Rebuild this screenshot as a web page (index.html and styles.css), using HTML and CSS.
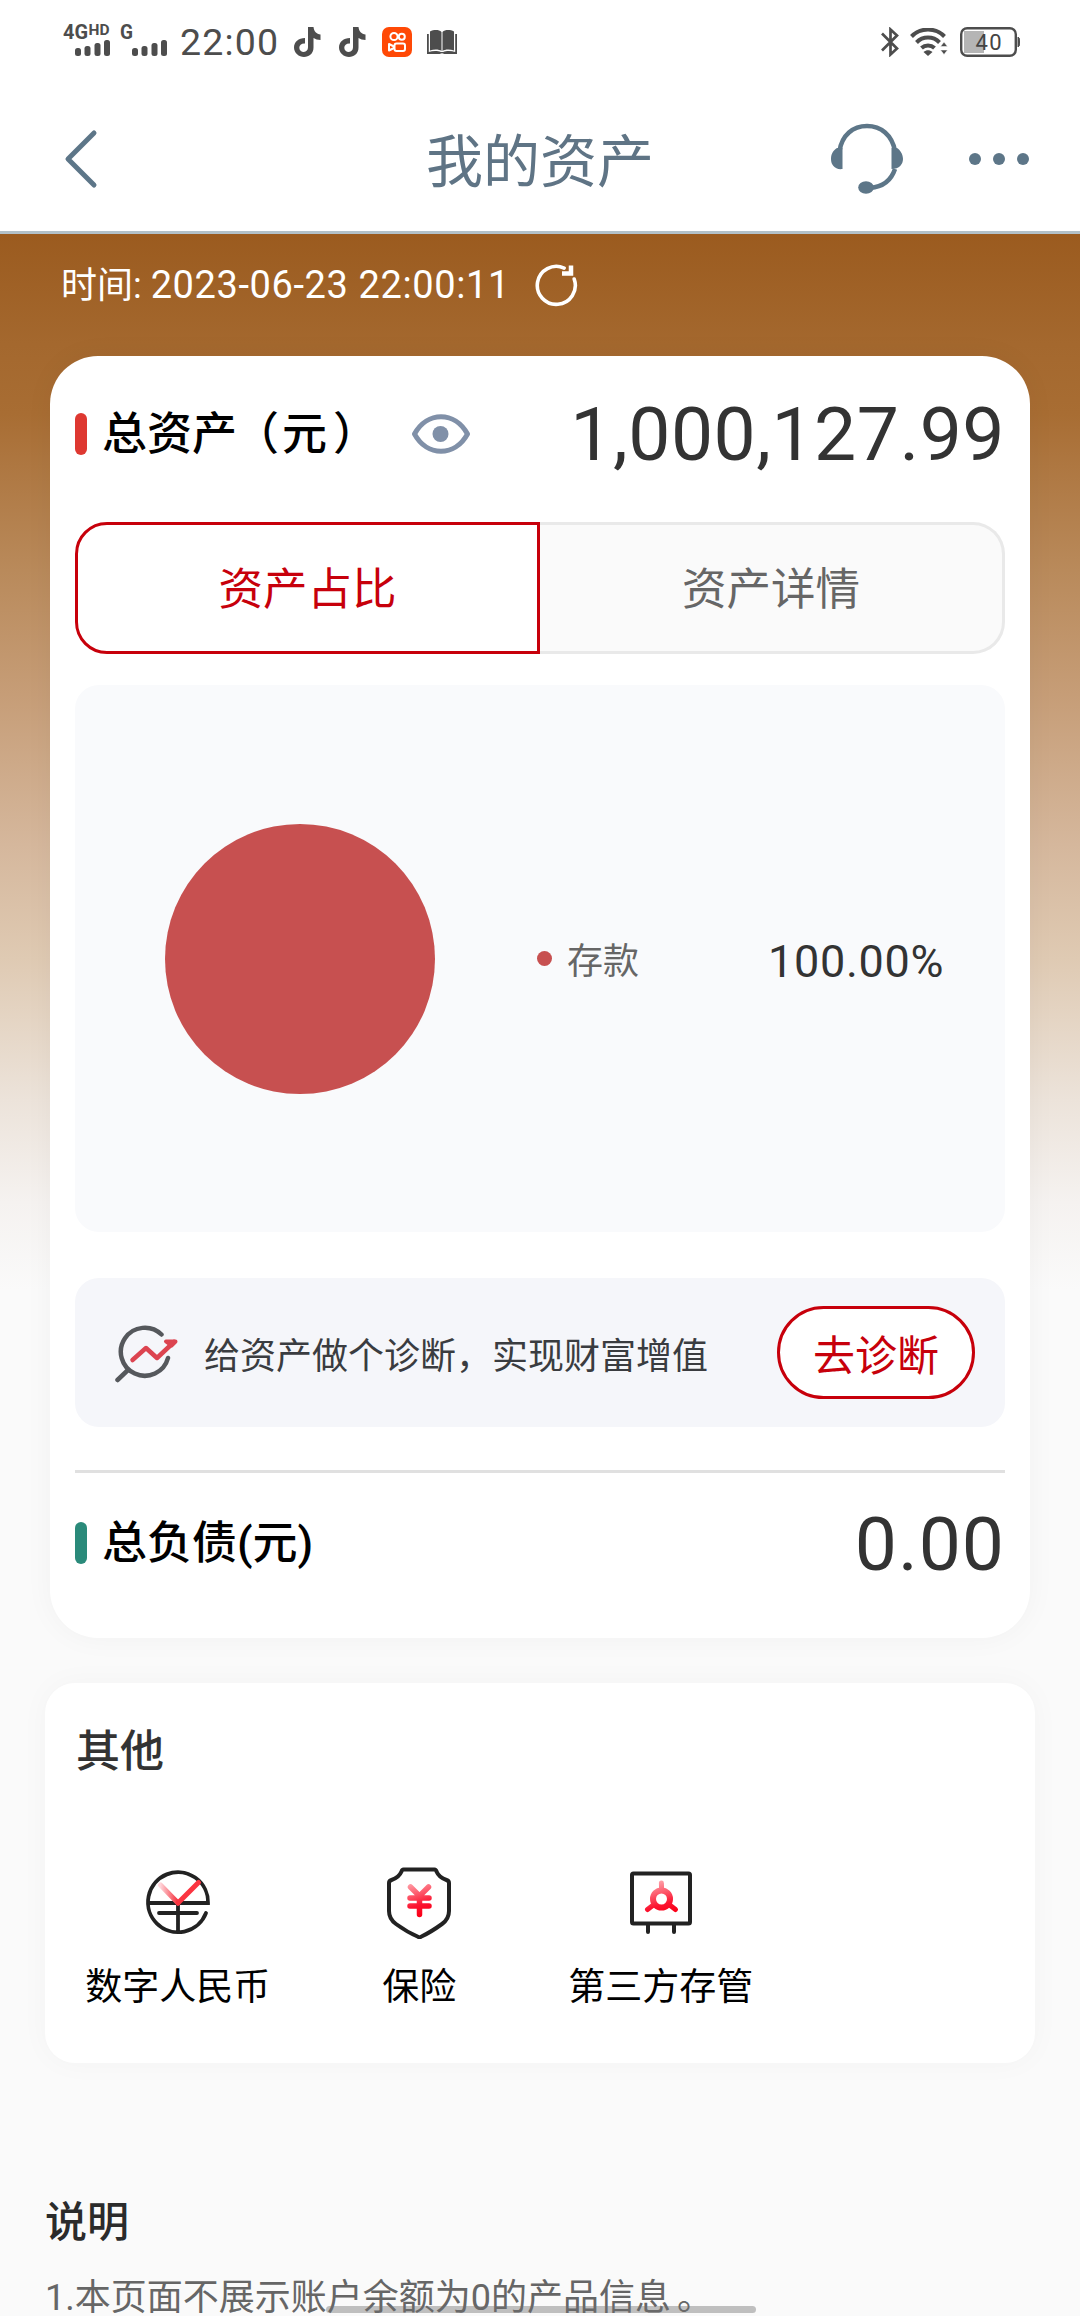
FILE: index.html
```html
<!DOCTYPE html>
<html lang="zh-CN">
<head>
<meta charset="utf-8">
<title>我的资产</title>
<link rel="stylesheet" href="styles.css">
</head>
<body>
<div class="screen">
  <div class="status">
    <svg class="signals" width="107" height="40" viewBox="0 0 107 40">
      <g font-family="Roboto, sans-serif" font-weight="700" fill="#4d4d4d">
        <text x="0" y="19" font-size="20" textLength="25" lengthAdjust="spacingAndGlyphs">4G</text>
        <text x="25.500" y="15" font-size="14" textLength="21" lengthAdjust="spacingAndGlyphs">HD</text>
        <text x="57" y="19" font-size="20" textLength="13" lengthAdjust="spacingAndGlyphs">G</text>
      </g>
      <g fill="#4d4d4d">
        <rect x="12" y="28" width="6" height="8" rx="2.500"/><rect x="21.500" y="26" width="6" height="10" rx="2.500"/><rect x="31.500" y="23" width="6" height="13" rx="2.500"/><rect x="41" y="20" width="6" height="16" rx="2.500"/>
        <rect x="69" y="28" width="6" height="8" rx="2.500"/><rect x="78.500" y="26" width="6" height="10" rx="2.500"/><rect x="88.500" y="23" width="6" height="13" rx="2.500"/><rect x="98" y="20" width="6" height="16" rx="2.500"/>
      </g>
    </svg>
    <span class="clock">22:00</span>
    <svg class="note" width="27" height="31" viewBox="0 0 27 31"><path d="M14 0h5.500c.5 4.500 3 7 7 7.500V13c-3 0-5-.8-7-2v9.500C19.500 26.500 15 30 10 30S0 26 0 20.500 4.500 11 11 11v5.500c-3.300-.3-5.700 1.500-5.700 4.200 0 2.400 2 4.200 4.500 4.200s4.200-1.800 4.200-4.600z" fill="#4d4d4d"/></svg>
    <svg class="note second" width="27" height="31" viewBox="0 0 27 31"><path d="M14 0h5.500c.5 4.500 3 7 7 7.500V13c-3 0-5-.8-7-2v9.500C19.500 26.500 15 30 10 30S0 26 0 20.500 4.500 11 11 11v5.500c-3.300-.3-5.700 1.500-5.700 4.200 0 2.400 2 4.200 4.500 4.200s4.200-1.800 4.200-4.600z" fill="#4d4d4d"/></svg>
    <svg class="video" width="30" height="30" viewBox="0 0 30 30"><rect width="30" height="30" rx="7" fill="#ff4906"/><g fill="none" stroke="#fff" stroke-width="2"><circle cx="12" cy="9.500" r="3.600"/><circle cx="19.800" cy="9.800" r="3"/><rect x="12.500" y="16.500" width="10.500" height="7.500" rx="2"/><path d="M12 19.500l-5-2.500v6.500l5-2.500z" stroke-linejoin="round"/></g></svg>
    <svg class="book" width="30" height="24" viewBox="0 0 30 24"><path d="M3 1.500C7-.5 12-.5 14.500 2v19C12 19 7 19 3 20.500zM27 1.500C23-.5 18-.5 15.500 2v19c2.500-2 7.500-2 11.500-.5zM0 4h1.800v18c4-1.200 9-1.200 12 0h2.400c3-1.200 8-1.200 12 0V4H30v20H18c-1 0-1.500-.8-3-.8s-2 .8-3 .8H0z" fill="#4d4d4d"/></svg>
    <svg class="bluetooth" width="18" height="30" viewBox="0 0 18 30"><path d="M1 6.500l15 15L9.500 27.500V2.500L16 8.500l-15 15" fill="none" stroke="#4d4d4d" stroke-width="2.700"/></svg>
    <svg class="wifi" width="38" height="28" viewBox="0 0 38 28"><g fill="none" stroke="#4d4d4d" stroke-width="4"><path d="M1.500 8.500a23 23 0 0 1 33 0"/><path d="M6.500 14.500a16 16 0 0 1 23 0"/><path d="M11.500 20a9.500 9.500 0 0 1 13 0"/></g><path d="M13.500 24c3-2.300 6-2.300 9 0L18 28z" fill="#4d4d4d"/><path d="M30.500 18.500h7l-3.500-4.500zM30.500 22h7L34 26.500z" fill="#4d4d4d" stroke="#fff" stroke-width=".5"/></svg>
    <svg class="battery" width="60" height="30" viewBox="0 0 60 30"><rect x="4" y="4" width="20" height="22" fill="#b5b5b5"/><rect x="1.200" y="1.200" width="54.600" height="27.600" rx="6" fill="none" stroke="#4d4d4d" stroke-width="2.400"/><path d="M58 10v10c1.500-1 2-3 2-5s-.5-4-2-5z" fill="#4d4d4d" stroke="#4d4d4d"/><text x="15.500" y="23" font-family="Roboto, sans-serif" font-size="22" textLength="26" fill="#444">40</text></svg>
  </div>

  <header class="navbar">
    <svg class="back" width="34" height="60" viewBox="0 0 34 60"><path d="M30 4L4 30l26 26" fill="none" stroke="#5d7688" stroke-width="5" stroke-linecap="round" stroke-linejoin="round"/></svg>
    <h1 class="title">我的资产</h1>
    <svg class="headset" width="74" height="72" viewBox="0 0 74 72"><path d="M9.500 28C12 12 23 3 37 3s25 9 28 25M65 46c-4 12-13 18-25 19" fill="none" stroke="#5d7688" stroke-width="4.500"/><path d="M12.500 25v21C5 47 1 42 1 36s3-9 6-11zM61.500 25v21c8 0 11.500-5 11.500-10s-3-9-6-11z" fill="#5d7688"/><ellipse cx="36" cy="64.500" rx="7.800" ry="6.200" fill="#5d7688"/></svg>
    <svg class="more" width="60" height="12" viewBox="0 0 60 12" fill="#5d7688"><circle cx="6" cy="6" r="6"/><circle cx="30" cy="6" r="6"/><circle cx="54" cy="6" r="6"/></svg>
  </header>

  <main class="content">
    <div class="time">
      <span>时间: <span class="stamp">2023-06-23 22:00:11</span></span>
      <svg class="refresh" width="44" height="44" viewBox="0 0 44 44"><path d="M40.500 17A19 19 0 1 1 31 5.500" transform="rotate(-3 22 22)" fill="none" stroke="#fff" stroke-width="3.600" stroke-linecap="round"/><path d="M28 10.500h9V2.500" fill="none" stroke="#fff" stroke-width="4.500"/></svg>
    </div>

    <section class="card assets">
      <div class="row">
        <i class="mark red"></i>
        <h2 class="label">总资产<span class="open">（</span>元<span class="close">）</span></h2>
        <svg class="eye" width="58" height="40" viewBox="0 0 58 40"><path d="M2.500 20C15-3 43-3 55.500 20 43 43 15 43 2.500 20z" fill="none" stroke="#8090a8" stroke-width="5" stroke-linejoin="round"/><circle cx="28.500" cy="20" r="8" fill="#8090a8"/></svg>
        <strong class="amount">1,000,127.99</strong>
      </div>
      <div class="tabs">
        <div class="tab active">资产占比</div>
        <div class="tab">资产详情</div>
      </div>
      <div class="chart">
        <div class="pie"></div>
        <i class="dot"></i>
        <span class="kind">存款</span>
        <span class="percent">100.00%</span>
      </div>
      <div class="banner">
        <svg width="64" height="60" viewBox="0 0 64 60" fill="none" stroke-linecap="round" stroke-linejoin="round"><path d="M46.500 11.500A24 24 0 1 0 53 35M13 47L2.500 57" stroke="#55585c" stroke-width="4.500"/><path d="M17.500 37L31 25l11 10 17-16" stroke="#dc4450" stroke-width="4.500"/><path d="M51 18.500h9.500l-4 4z" fill="#dc4450" stroke="#dc4450" stroke-width="4"/></svg>
        <span class="tip">给资产做个诊断，实现财富增值</span>
        <span class="go">去诊断</span>
      </div>
      <div class="row debt">
        <i class="mark green"></i>
        <h2 class="label">总负债(元)</h2>
        <strong class="amount debt-amount">0.00</strong>
      </div>
    </section>

    <section class="card other">
      <h2 class="heading">其他</h2>
      <div class="grid">
        <div class="item">
          <svg width="72" height="72" viewBox="0 0 72 72" fill="none" stroke-linecap="round"><defs><linearGradient id="pink" x1="0" x2="1"><stop offset="0" stop-color="#ffd5da"/><stop offset="1" stop-color="#f5303c"/></linearGradient></defs><g stroke="#222" stroke-width="3.800"><path d="M64 46A30 30 0 1 1 66 36H8M17 46h38M36 37v28"/></g><path d="M18.500 18L36 36" stroke="url(#pink)" stroke-width="5"/><path d="M56.500 15.500L36 36" stroke="#fb3440" stroke-width="5"/></svg>
          <span>数字人民币</span>
        </div>
        <div class="item">
          <svg width="72" height="72" viewBox="0 0 72 72" fill="none" stroke-linecap="round" stroke-linejoin="round"><defs><linearGradient id="rise" gradientUnits="userSpaceOnUse" x1="28" y1="16" x2="38" y2="48"><stop offset="0" stop-color="#ffa0a8"/><stop offset=".7" stop-color="#fb1430"/><stop offset="1" stop-color="#fb0018"/></linearGradient></defs><path d="M20.500 2.500h31q1.500 0 2 2 2.500 6 10 8.500 2.500.8 2.500 3v28q0 8-7 13-11 8-20.500 12.500-2 1.500-4 0Q24 65 13 57q-7-5-7-13V16q0-2.200 2.500-3 7.500-2.500 10-8.500.5-2 2-2z" stroke="#222" stroke-width="4"/><path d="M27.500 20l9 9 9-9M27 31h19M27 39h19M36.500 29v18.500" stroke="url(#rise)" stroke-width="5.500"/></svg>
          <span>保险</span>
        </div>
        <div class="item">
          <svg width="72" height="72" viewBox="0 0 72 72" fill="none" stroke-linecap="round" stroke-linejoin="round"><g stroke="#222" stroke-width="4"><rect x="7" y="6.500" width="58" height="50" rx="1.500"/><path d="M23 58v7M49 58v7"/></g><g stroke="url(#rise)" stroke-width="5"><circle cx="36.500" cy="32" r="8.500" stroke-width="6"/><path d="M36.400 16L36.600 23M29 37.500L22.500 42.500M44 37.500l6.500 5"/></g></svg>
          <span>第三方存管</span>
        </div>
      </div>
    </section>

    <section class="notes">
      <h2 class="notes-title">说明</h2>
      <p class="notes-text">1.本页面不展示账户余额为0的产品信息<span class="stop">。</span></p>
    </section>
  </main>
  <div class="home-bar"></div>
</div>
</body>
</html>
```
FILE: styles.css
```css
* { box-sizing: border-box; margin: 0; padding: 0; }
body { background: #fafafa; font-family: Roboto, "Noto Sans CJK SC", sans-serif; color: #333; }
svg { display: block; flex: none; }
.screen { position: relative; width: 1080px; height: 2316px; overflow: hidden; }

.status { display: flex; align-items: flex-start; height: 84px; padding: 20px 20px 0 63px; background: #fff; }
.signals { margin-right: 10px; }
.clock { width: 102px; font-size: 37.500px; line-height: 45px; letter-spacing: 1.200px; color: #4d4d4d; }
.note { margin: 7px 0 0 12px; }
.note.second { margin-left: 18px; }
.video { margin: 7px 0 0 16px; }
.book { margin: 10px 0 0 15px; }
.bluetooth { margin: 7px 0 0 424px; }
.wifi { margin: 8px 0 0 11px; }
.battery { margin: 7px 0 0 12px; }

.navbar { display: flex; align-items: center; height: 150px; padding: 2px 52px 0 64px; border-bottom: 3px solid #b3c1c8; background: #fff; }
.title { width: 228px; margin-left: 328px; padding-top: 8px; font-size: 57px; font-weight: 400; line-height: 80px; white-space: nowrap; color: #5f7485; }
.headset { margin-left: 176px; }
.more { margin-left: 65px; }

.content { height: 2082px; background: linear-gradient(#9b5b1f 0, #a4682e 110px, #a86d33 180px, #ae7741 232px, #b98a5b 337px, #c69d77 460px, #d5b79c 610px, #dfcab3 725px, #ece3da 866px, #f5f2f0 968px, #fafafa 1056px); }
.time { display: flex; align-items: center; height: 122px; padding: 0 0 20px 61px; color: #fff; font-size: 36px; line-height: 50px; }
.stamp { font-size: 38px; letter-spacing: .600px; }
.refresh { margin-left: 24px; }

.card { background: #fff; }
.assets { width: 980px; height: 1282px; margin: 0 50px; padding: 0 25px; border-radius: 48px; box-shadow: 0 0 30px rgba(0, 0, 0, .04); }
.row { display: flex; align-items: center; height: 166px; padding-bottom: 11px; }
.mark { width: 12px; height: 42px; margin-right: 15px; border-radius: 6px; }
.red { background: #de3831; }
.green { background: #2a8a7a; }
.label { padding-top: 2px; font-size: 45px; font-weight: 500; line-height: 66px; color: #000; white-space: nowrap; }
.open { margin: 0 3px 0 -3px; }
.close { margin-left: 6px; }
.eye { margin-left: 34px; }
.amount { margin-left: auto; font-size: 75px; font-weight: 400; line-height: 88px; letter-spacing: .5px; }
.debt-amount { padding-top: 2px; letter-spacing: 1px; }

.tabs { display: flex; height: 132px; }
.tab { flex: none; display: flex; align-items: center; justify-content: center; width: 465px; padding-bottom: 6px; border: 3px solid #e9e9e9; border-left: 0; border-radius: 0 32px 32px 0; background: #fafafa; font-size: 44.500px; color: #666; }
.tab.active { border: 3px solid #c7000b; border-radius: 32px 0 0 32px; background: #fff; color: #c7000b; }

.chart { display: flex; align-items: center; height: 547px; margin-top: 31px; padding-left: 90px; border-radius: 24px; background: #f9fafc; }
.pie { width: 270px; height: 270px; border-radius: 50%; background: #c75050; }
.dot { width: 15px; height: 15px; margin-left: 102px; border-radius: 50%; background: #c75050; }
.kind { margin-left: 15px; padding-bottom: 2px; font-size: 36px; color: #666; }
.percent { margin-left: 129px; padding-top: 5px; font-size: 45px; letter-spacing: .700px; }

.banner { display: flex; align-items: center; height: 149px; margin-top: 46px; padding: 0 30px 0 40px; border-radius: 24px; background: #f5f6fa; }
.tip { margin-left: 25px; font-size: 36px; white-space: nowrap; color: #3a3c40; }
.go { display: flex; align-items: center; justify-content: center; width: 198px; height: 93px; margin-left: auto; border: 3px solid #c7000b; border-radius: 47px; background: #fff; font-size: 42px; color: #c7000b; }

.debt { height: 150px; margin-top: 43px; padding-bottom: 7px; border-top: 3px solid #e0e0e0; }

.other { width: 990px; height: 380px; margin: 45px 45px 0; padding: 39px 12px 0; border-radius: 30px; box-shadow: 0 0 30px rgba(0, 0, 0, .03); }
.heading { padding-left: 19px; font-size: 44px; font-weight: 500; line-height: 60px; }
.grid { display: grid; grid-template-columns: repeat(4, 1fr); margin-top: 85px; }
.item { display: flex; flex-direction: column; align-items: center; gap: 22px; font-size: 37px; line-height: 54px; color: #000; }

.notes { padding: 132px 45px 0; }
.notes-title { font-size: 42px; font-weight: 500; line-height: 56px; color: #2b2b2b; }
.notes-text { margin-top: 26px; font-size: 36px; line-height: 42px; white-space: nowrap; color: #666; }
.stop { margin-left: 6px; }
.home-bar { position: absolute; left: 326px; bottom: 3px; width: 430px; height: 7px; border-radius: 4px; background: rgba(110, 110, 110, .42); }
```
